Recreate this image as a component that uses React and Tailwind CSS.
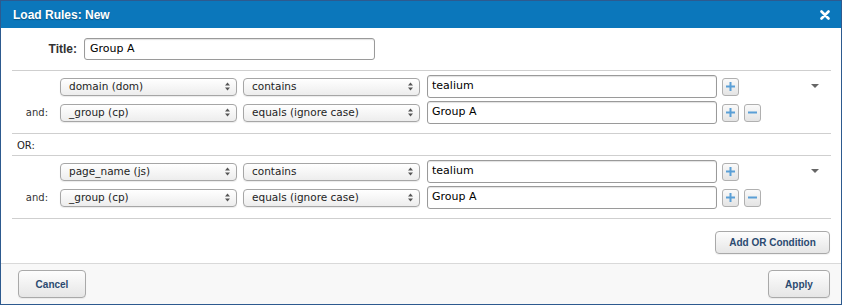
import React from "react";

const font = { fontFamily: '"Liberation Sans", Arial, sans-serif' };
const reg = { fontFamily: '"DejaVu Sans", "Liberation Sans", sans-serif' };

function UpDown() {
  return (
    <svg width="5" height="9" viewBox="0 0 5 9" className="shrink-0">
      <path d="M2.5 0.5 L5 3.5 L0 3.5 Z" fill="#555" />
      <path d="M2.5 8.5 L5 5.5 L0 5.5 Z" fill="#555" />
    </svg>
  );
}

function Select({ text, className = "" }) {
  return (
    <div
      style={reg}
      className={
        "flex h-[18px] w-[177px] shrink-0 items-center justify-between rounded-[4px] border border-[#a6a6a6] bg-gradient-to-b from-white to-[#ededed] pl-[8px] pr-[6px] text-[10.5px] text-[#1e1e1e] shadow-[0_1px_1px_rgba(0,0,0,0.08)] " +
        className
      }
    >
      <span className="leading-none">{text}</span>
      <UpDown />
    </div>
  );
}

function TextInput({ value, className = "" }) {
  return (
    <div
      style={reg}
      className={
        "flex h-[23px] w-[290px] shrink-0 items-center rounded-[3px] border border-[#9a9a9a] bg-white pl-[4px] text-[11px] text-black shadow-[inset_0_1px_1px_rgba(0,0,0,0.12)] " +
        className
      }
    >
      {value}
    </div>
  );
}

function SmallBtn({ minus }) {
  return (
    <div className="flex h-[18px] w-[17px] shrink-0 items-center justify-center rounded-[3px] border border-[#b0b0b0] bg-gradient-to-b from-[#fafafa] to-[#e4e4e4]">
      <svg width="9" height="9" viewBox="0 0 9 9">
        {!minus && <rect x="3.5" y="0" width="2" height="9" fill="#5b9fd6" />}
        <rect x="0" y="3.5" width="9" height="2" fill="#5b9fd6" />
      </svg>
    </div>
  );
}

function Row({ label, field, op, value, minus, caret }) {
  return (
    <div className="flex h-[23px] items-center">
      <div style={reg} className="w-[36px] shrink-0 text-right text-[10px] text-[#333]">{label}</div>
      <Select text={field} className="ml-[12px]" />
      <Select text={op} className="ml-[6px]" />
      <TextInput value={value} className="ml-[7px]" />
      <div className="ml-[5px]">
        <SmallBtn />
      </div>
      {minus && (
        <div className="ml-[5px]">
          <SmallBtn minus />
        </div>
      )}
      {caret && (
        <svg width="8" height="4" viewBox="0 0 8 4" className="ml-auto mr-[12px] mb-[2px]">
          <path d="M0 0 L8 0 L4 4 Z" fill="#666" />
        </svg>
      )}
    </div>
  );
}

function Group({ first }) {
  return (
    <div className="flex flex-col gap-[3px] border-t border-[#cfcfcf] pt-[4px] pb-[9px]">
      <Row label="" field={first} op="contains" value="tealium" caret />
      <Row label="and:" field="_group (cp)" op="equals (ignore case)" value="Group A" minus />
    </div>
  );
}

function Button({ children, className = "" }) {
  return (
    <div
      className={
        "flex items-center justify-center rounded-[4px] border border-[#a9a9a9] bg-gradient-to-b from-[#fdfdfd] to-[#e6e6e6] text-[10px] font-bold text-[#2b4a70] shadow-[0_1px_1px_rgba(0,0,0,0.06)] " +
        className
      }
    >
      {children}
    </div>
  );
}

export default function App() {
  return (
    <div style={font} className="flex h-[305px] w-[842px] flex-col overflow-hidden border border-[#2d5a8f] bg-white">
      <div className="flex h-[27px] shrink-0 items-center justify-between bg-[#0b77bb] pl-[12px] pr-[10px]">
        <span className="text-[12px] font-bold text-white [text-shadow:0_1px_1px_rgba(0,0,0,0.3)]">
          Load Rules: New
        </span>
        <svg width="10" height="10" viewBox="0 0 10 10" className="mr-[1px]">
          <path d="M1.5 1.5 L8.5 8.5 M8.5 1.5 L1.5 8.5" stroke="white" strokeWidth="2.6" strokeLinecap="round" />
        </svg>
      </div>

      <div className="flex flex-1 flex-col pl-[11px] pr-[10px] pt-[10px]">
        <div className="flex h-[22px] items-center">
          <div className="w-[65px] shrink-0 text-right text-[12px] font-bold text-[#333]">Title:</div>
          <div
            style={reg}
            className="ml-[7px] flex h-[22px] w-[291px] items-center rounded-[3px] border border-[#9a9a9a] bg-white pl-[5px] text-[11px] text-black shadow-[inset_0_1px_1px_rgba(0,0,0,0.12)]"
          >
            Group A
          </div>
        </div>

        <div className="mt-[10px]">
          <Group first="domain (dom)" />
          <div
            style={reg}
            className="flex h-[22px] items-center border-t border-[#cfcfcf] pl-[5px] pt-[2px] text-[10px] text-[#222]"
          >
            OR:
          </div>
          <Group first="page_name (js)" />
          <div className="border-t border-[#cfcfcf]" />
        </div>

        <div className="mt-[12px] flex justify-end pr-[1px]">
          <Button className="h-[23px] w-[115px]">Add OR Condition</Button>
        </div>
      </div>

      <div className="flex h-[41px] shrink-0 items-start justify-between border-t border-[#d9d9d9] bg-[#f8f8f8] pl-[17px] pr-[11px] pt-[6px]">
        <Button className="h-[28px] w-[68px]">Cancel</Button>
        <Button className="h-[28px] w-[62px]">Apply</Button>
      </div>
    </div>
  );
}
